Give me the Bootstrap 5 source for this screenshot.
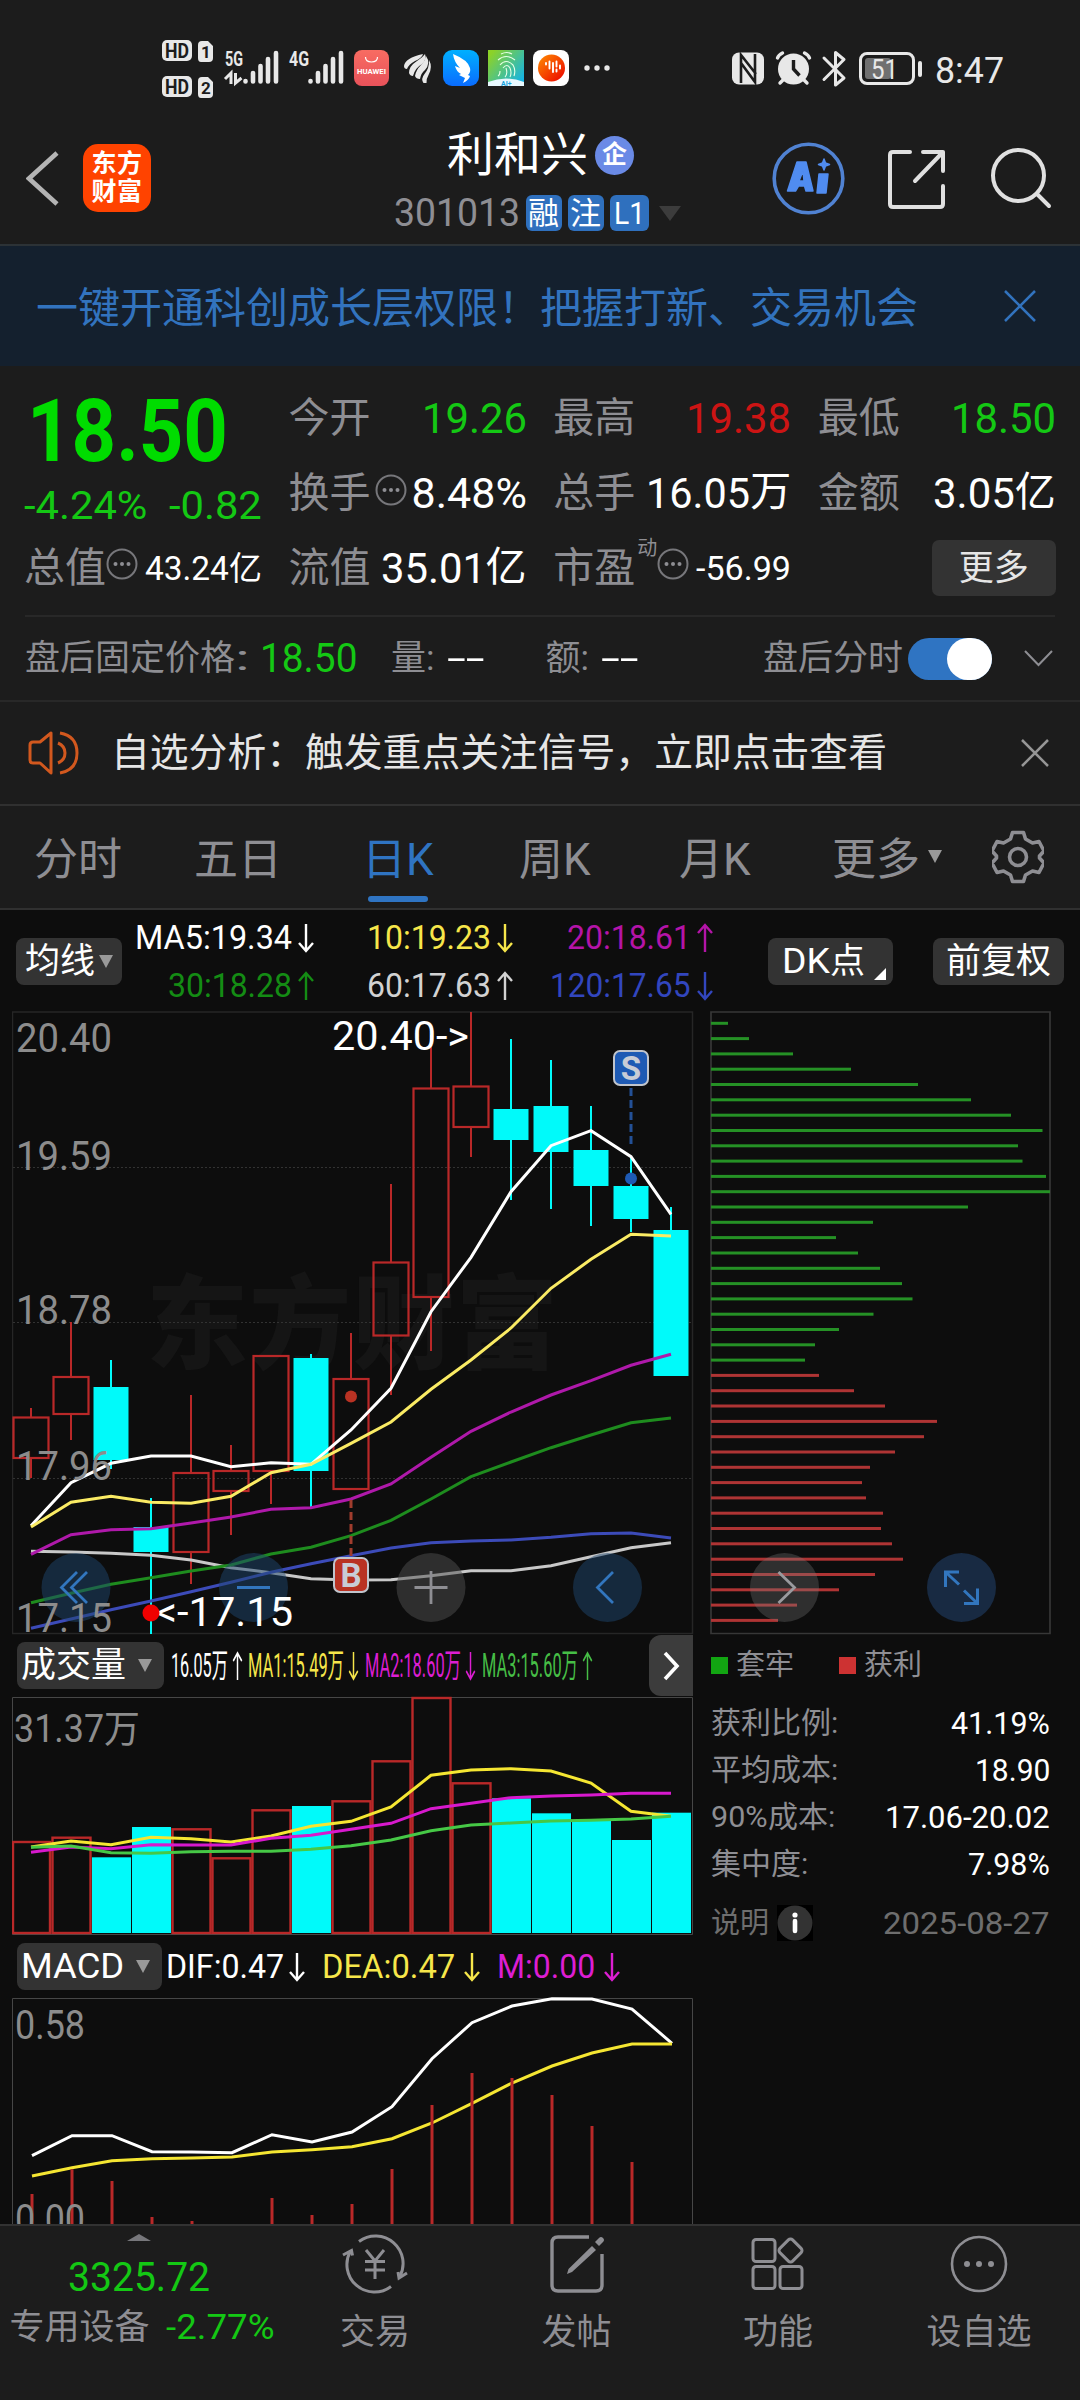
<!DOCTYPE html>
<html lang="zh-CN">
<head>
<meta charset="utf-8">
<meta name="viewport" content="width=device-width, initial-scale=1">
<title>利和兴 301013</title>
<link href="https://cdn.jsdelivr.net/npm/bootstrap@5.3.0/dist/css/bootstrap.min.css" rel="stylesheet">
<style>
:root{--bg:#1c1c1c;--deep:#0d0d0d;--grey:#8e8e93;--blue:#2f74c2;--line:#303030;--up:#cc1414;--down:#14c814}
body{background:var(--bg);color:#fff;font-family:Roboto,"Noto Sans CJK SC",sans-serif;line-height:1;width:1080px;height:2400px;overflow:hidden;margin:0}
svg{display:block;flex:none}
.nw{white-space:nowrap}
.fit{display:inline-block;white-space:nowrap;flex:none}
.fit>span{display:inline-block;transform-origin:0 50%}
.c-grey{color:var(--grey)}.c-down{color:var(--down)}.c-up{color:var(--up)}.c-blue{color:var(--blue)}
.c-y{color:#f6e64a}.c-m{color:#b414a8}.c-m2{color:#dc1ed2}.c-g{color:#148c14}.c-g2{color:#46be46}.c-w2{color:#d2d2d2}.c-b{color:#3246be}
.status{height:116px;padding:30px 0 0 162px}
.status-r{margin-left:122px}
.topbar{height:130px;display:grid;grid-template-columns:1fr auto 1fr;border-bottom:2px solid #2c3236}
.tb-l{padding:28px 0 0 26px;gap:23px}
.brand{width:68px;height:68px;border-radius:15px;background:#ff4300;font-size:25px;line-height:28px;font-weight:700;letter-spacing:.5px}
.tb-c{padding:12px 6px 0 0}
.stock{font-size:47px;line-height:54px;gap:7px;padding-left:7px}
.ent{width:39px;height:39px;border-radius:50%;background:#6a8ae6;font-size:25px;font-weight:700}
.code{font-size:38px;gap:6px;margin-top:13px;height:36px}
.tag-b{height:36px;min-width:36px;border-radius:6px;background:#2f70be;font-size:31px}
.tri{width:0;height:0;border:11px solid transparent;border-top:15px solid #3c3c3c;border-bottom:0}
.tb-r{padding:23px 0 0 0;gap:0}
.promo{height:120px;background:#14202e;padding:0 43px 0 36px;font-size:42px;color:#3273be}
.promo span{padding-top:5px}
.quote{height:249px;padding:0 24px;position:relative}
.qgrid{display:grid;grid-template-columns:repeat(4,238px);column-gap:26.6px;grid-template-rows:75px 75px 74px;padding-top:15px}
.qgrid>div{display:flex;align-items:center;justify-content:space-between;white-space:nowrap}
.lab{font-size:41px;color:var(--grey)}
.v43{font-size:43px}.v33{font-size:33px}
.price-box{grid-row:1/3;flex-direction:column;align-items:flex-start!important;justify-content:flex-start!important}
.price{font-size:87px;font-weight:700;color:#00dc00;height:92px;padding:7px 0 0 3px}
.chg{font-size:39px;height:40px;margin-top:14px}
.more{width:124px;height:56px;border-radius:7px;background:#333;font-size:35px;color:#e6e6e6}
.dong{font-size:20px;align-self:flex-start;margin:7px 0 0 2px;color:var(--grey)}
.after{height:85px;margin:0 25px;border-top:2px solid #282828;font-size:35px}
.big-n{font-size:40px;margin-left:11px}
.qty{margin-left:34px}.amt{margin-left:62px}.dash-v{margin-left:12px}
.switch-on{width:84px;height:42px;border-radius:21px;background:var(--blue);padding-left:39px;margin:0 31px 0 5px}
.switch-on i{display:block;width:45px;height:42px;border-radius:21px;background:#fff}
.notice{height:106px;border-top:2px solid #282828;border-bottom:2px solid #303030;font-size:38.8px;color:#e6e6e6;padding:0 30px 0 28px}
.notice .msg{padding-left:31px}
.tabs-k{height:104px;border-bottom:2px solid #303030;font-size:44px;color:var(--grey);padding:0 36px 0 34px;display:grid;grid-template-columns:160px 168px 157px 160px 153px 160px 52px;align-items:center}
.tabs-k>div{height:102px;display:flex;align-items:center;white-space:nowrap;padding-top:6px}
.tabs-k>div:last-child{padding-top:0}
.tab-on{color:var(--blue);position:relative}
.tab-on::after{content:"";position:absolute;left:6px;bottom:6px;width:60px;height:6px;border-radius:3px;background:var(--blue)}
.deep{background:var(--deep)}
.ma-row{height:101px;padding:2px 16px 0}
.btn-d{background:#333;border-radius:8px;height:47px;font-size:35px;color:#fff;white-space:nowrap;flex:none}
.btn-ma{gap:4px;padding:0 9px 0 9px}
.pad13{padding:0 13px}
.dk{padding:0 7px 0 14px;gap:9px;margin-right:40px}
.tdn{width:0;height:0;border:7px solid transparent;border-top:13px solid #999;border-bottom:0;flex:none}
.ma-grid{display:grid;grid-template-columns:193px 199px 200px;row-gap:6px;justify-items:end;font-size:33px}
.ma-grid>div{height:42px;display:flex;align-items:center;gap:5px}
.left-col{width:682px;margin-left:12px}
.right-col{width:342px;margin-left:17px}
.ind{height:61px;font-size:33px;padding-left:5px}
.ind .d-flex{gap:4px}
.v1{margin-left:7px}.v2{margin-left:5px}.v3{margin-left:6px}
.nextb{width:44px;height:61px;background:#3c3c3c;border-radius:12px 0 0 12px;margin-right:1px}
.legend-k{font-size:29px;height:60px;color:var(--grey)}
.sq{width:17px;height:17px;margin-right:8px}
.sq-g{background:#12a512}.sq-r{background:#cd3232;margin-left:45px}
.stat-r{height:47px;font-size:32px;width:339px}
.stat-r .c-grey{font-size:30px}
.stat-d{height:72px;font-size:32px;color:#6e6e6e;width:339px}
.note-k{font-size:29px}
.bottomnav{height:176px;border-top:2px solid #323232;font-size:35px;color:var(--grey)}
.bottomnav>div{flex:none}
.bn-idx{width:288px;padding:8px 11px 0 0}
.idx{font-size:41px}
.sector{margin-top:12px;padding-left:7px}
.bn-it{padding-top:8px}
.bn-it svg{margin-bottom:21px}
.w-a{width:174px}.w-b{width:229px}.w-c{width:215px;padding-left:13px}
</style>
<script src="https://cdn.jsdelivr.net/npm/bootstrap@5.3.0/dist/js/bootstrap.bundle.min.js"></script>
</head>
<body>
<svg width="0" height="0" class="position-absolute">
  <defs>
    <symbol id="dn" viewBox="0 0 18 30"><path d="M9 1V28M2 20l7 8 7-8" fill="none" stroke="currentColor" stroke-width="2.4"/></symbol>
    <symbol id="up" viewBox="0 0 18 30"><path d="M9 29V2M2 10l7-8 7 8" fill="none" stroke="currentColor" stroke-width="2.4"/></symbol>
    <symbol id="dots" viewBox="0 0 32 32"><circle cx="16" cy="16" r="14.5" fill="none" stroke="#77777b" stroke-width="2"/><g fill="#8e8e93"><circle cx="9.5" cy="16" r="2"/><circle cx="16" cy="16" r="2"/><circle cx="22.5" cy="16" r="2"/></g></symbol>
    <linearGradient id="gh" x2="0" y2="1"><stop stop-color="#f86c62"/><stop offset="1" stop-color="#e8525a"/></linearGradient>
    <linearGradient id="gb" x2="0" y2="1"><stop stop-color="#00b0ff"/><stop offset="1" stop-color="#0a6cff"/></linearGradient>
    <linearGradient id="gg" x2="1" y2=".8"><stop offset=".1" stop-color="#8cd228"/><stop offset="1" stop-color="#14b4e6"/></linearGradient>
    <linearGradient id="go" x2="1" y2="1"><stop stop-color="#ff8c00"/><stop offset="1" stop-color="#eb0000"/></linearGradient>
  </defs>
</svg>

<div class="status d-flex">
  <svg width="448" height="76" viewBox="162 30 448 76" font-family="Roboto,sans-serif" font-weight="700">
    <g fill="#e8e8e8">
      <rect x="162" y="40" width="30" height="21" rx="5"/><rect x="162" y="76" width="30" height="21" rx="5"/>
      <path d="M202 41h6l5 5v12q0 4-4 4h-8q-3 0-3-4V45q0-4 4-4zM202 77h6l5 5v12q0 4-4 4h-8q-3 0-3-4V81q0-4 4-4z"/>
    </g>
    <g fill="#1c1c1c" font-size="21"><text x="165" y="58" textLength="24" lengthAdjust="spacingAndGlyphs">HD</text><text x="165" y="94" textLength="24" lengthAdjust="spacingAndGlyphs">HD</text><text x="201" y="58" font-size="17">1</text><text x="201" y="94" font-size="17">2</text></g>
    <g fill="#e8e8e8" font-size="20"><text x="225" y="66" textLength="18" lengthAdjust="spacingAndGlyphs">5G</text><text x="289" y="66" textLength="20" lengthAdjust="spacingAndGlyphs">4G</text></g>
    <path d="M225 79l6-6v11M235.500 73v10l6-5" fill="none" stroke="#e8e8e8" stroke-width="3"/>
    <g stroke="#e8e8e8" stroke-width="4.600" stroke-linecap="round"><path d="M245.500 81v.5M253 73v8.500M260.500 66v15.500M268 59v22.500M276 53v28.500M310.500 81v.5M318 73v8.500M325.500 66v15.500M333 59v22.500M341 53v28.500"/></g>
    <rect x="354" y="50" width="35" height="36" rx="8" fill="url(#gh)"/><path d="M365.500 57q0 5 6 5t6-5" fill="none" stroke="#fff" stroke-width="1.200"/><text x="357" y="74" font-size="7" fill="#fff" textLength="29" lengthAdjust="spacingAndGlyphs">HUAWEI</text>
    <g fill="#e8e8e8"><path d="M404 66q1-8 19-12-1 4-8 7-6 3-8 8-3 0-3-3z"/><path d="M409 73q0-7 8-12 6-4 8-7 2 5-3 10-7 4-9 12-3 0-4-3z"/><path d="M415 76q1-6 6-11 4-4 5-9 5 7-1 14-4 3-5 9-4 0-5-3z"/><path d="M423.500 83q-3-4 1-9 5-6 4.500-14 4 7-.5 15-2 3-2 8z"/></g>
    <rect x="443" y="50" width="36" height="36" rx="9" fill="url(#gb)"/><path d="M453 54q15 6 17 14 1 4-2 7l2 1q-1 4-7 7l2-5-6-3 2-1q-5-3-6-8l5 2q-6-6-7-14z" fill="#fff"/>
    <rect x="488" y="50" width="36" height="36" fill="url(#gg)"/><path d="M488 82q18-7 36 0v4h-36z" fill="#e8f8ff"/><text x="501" y="85.500" font-size="7" fill="#14a0dc">AI+</text>
    <g fill="none" stroke="#e6ffe6" stroke-width="1.100"><path d="M501 54q6-3 11 0M498 60q8-7 17 0M500 65q6-7 13 0 3 5 1 11M503 68q4-5 7 0 2 5 0 9M506 68q2 6-1 9M500 71q0 4-2 5"/></g>
    <rect x="533" y="50" width="36" height="36" rx="8" fill="#fff"/><circle cx="551.500" cy="68" r="13.500" fill="url(#go)"/><path d="M546 63v1.500M549.500 61.500v7M553 63v9M556.500 61.500v5M556.500 69.500v2M560 65.500v3" stroke="#fff" stroke-width="1.900" fill="none" stroke-linecap="round"/>
    <g fill="#e8e8e8"><circle cx="587" cy="68" r="2.700"/><circle cx="597" cy="68" r="2.700"/><circle cx="607" cy="68" r="2.700"/></g>
  </svg>
  <svg class="status-r" width="276" height="76" viewBox="732 30 276 76" font-family="Roboto,sans-serif">
    <rect x="732" y="52.500" width="32" height="32" rx="7" fill="#e8e8e8"/><path d="M741 83V55l15 19M755 54v28L741 63" fill="none" stroke="#1c1c1c" stroke-width="2.600"/>
    <circle cx="793.500" cy="69" r="15.500" fill="#e8e8e8"/><path d="M793.500 60v9l6 6.500" fill="none" stroke="#1c1c1c" stroke-width="3.400"/><path d="M777.500 58q1-3 5-5M809.500 58q-1-3-5-5M780 83l4-4M807 83l-4-4" fill="none" stroke="#e8e8e8" stroke-width="3.400" stroke-linecap="round"/>
    <path d="M824 58l20 20-8.500 7V52.500l8.500 7-20 20" fill="none" stroke="#e8e8e8" stroke-width="3" stroke-linejoin="round" stroke-linecap="round"/>
    <rect x="860.500" y="53.500" width="53" height="30" rx="6.500" fill="none" stroke="#e8e8e8" stroke-width="3"/><rect x="865" y="58" width="26" height="21" rx="3" fill="#707070"/><rect x="918" y="61" width="4" height="16" rx="2" fill="#e8e8e8"/>
    <text x="871" y="78.500" font-size="27" fill="#e8e8e8" textLength="27" lengthAdjust="spacingAndGlyphs">51</text>
    <text x="935" y="83" font-size="37" fill="#e8e8e8" textLength="69" lengthAdjust="spacingAndGlyphs">8:47</text>
  </svg>
</div>

<div class="topbar">
  <div class="tb-l d-flex">
    <svg width="34" height="68" viewBox="26 144 34 68"><path d="M57 153L29 178.500 57 204" fill="none" stroke="#b4b4b4" stroke-width="4.600"/></svg>
    <div class="brand d-flex flex-column justify-content-center text-center"><span>东方</span><span>财富</span></div>
  </div>
  <div class="tb-c d-flex flex-column align-items-center">
    <div class="stock d-flex align-items-center"><span>利和兴</span><span class="ent d-flex align-items-center justify-content-center">企</span></div>
    <div class="code d-flex align-items-center"><span class="fit c-grey" data-w="126">301013</span><span class="tag-b d-flex align-items-center justify-content-center">融</span><span class="tag-b d-flex align-items-center justify-content-center">注</span><span class="tag-b d-flex align-items-center justify-content-center px-1"><span class="fit" data-w="31">L1</span></span><span class="tri ms-1"></span></div>
  </div>
  <div class="tb-r d-flex justify-content-end">
    <svg width="310" height="80" viewBox="770 139 310 80">
      <circle cx="808.500" cy="178.500" r="34.300" fill="none" stroke="#5082d2" stroke-width="3.600"/>
      <g fill="#508cf0" stroke="#508cf0" stroke-width="1.500" stroke-linejoin="round"><path fill-rule="evenodd" d="M797 162h9l7 29h-7l-1.500-5h-6l-3 5h-8zM803 171l-4 10h5z"/><path d="M819 174h9l-2 19h-9z"/><path d="M824 159l1.500 4 4 1.500-4 1.500-1.500 4-1.500-4-4-1.500 4-1.500z"/></g>
      <g fill="none" stroke="#e0e0e0" stroke-width="4" stroke-linecap="round" stroke-linejoin="round"><path d="M910 152h-17q-3 0-3 3v49q0 3 3 3h47q3 0 3-3v-18M923 152h20v19M943 152l-28 29"/><circle cx="1018.500" cy="175.500" r="25.500"/><path d="M1037 194l12 12"/></g>
    </svg>
  </div>
</div>

<div class="promo d-flex align-items-center justify-content-between">
  <span>一键开通科创成长层权限！把握打新、交易机会</span>
  <svg width="34" height="34"><path d="M2 2l30 30M32 2L2 32" stroke="#3273be" stroke-width="2.500"/></svg>
</div>

<div class="quote">
  <div class="qgrid">
    <div class="price-box">
      <div class="price"><span class="fit" data-w="201">18.50</span></div>
      <div class="chg c-down d-flex w-100 justify-content-between"><span class="fit" data-w="123">-4.24%</span><span class="fit" data-w="93">-0.82</span></div>
    </div>
    <div><span class="lab">今开</span><span class="fit v43 c-down" data-w="105">19.26</span></div>
    <div><span class="lab">最高</span><span class="fit v43 c-up" data-w="105">19.38</span></div>
    <div><span class="lab">最低</span><span class="fit v43 c-down" data-w="105">18.50</span></div>
    <div><span class="lab d-flex align-items-center">换手<svg width="32" height="32" class="mb-2 ms-1"><use href="#dots"/></svg></span><span class="fit v43" data-w="115">8.48%</span></div>
    <div><span class="lab">总手</span><span class="d-flex"><span class="fit v43" data-w="104">16.05</span><span class="lab text-white">万</span></span></div>
    <div><span class="lab">金额</span><span class="d-flex"><span class="fit v43" data-w="82">3.05</span><span class="lab text-white">亿</span></span></div>
    <div><span class="lab d-flex align-items-center">总值<svg width="32" height="32" class="mb-2"><use href="#dots"/></svg></span><span class="d-flex v33"><span class="fit" data-w="84">43.24</span>亿</span></div>
    <div><span class="lab">流值</span><span class="d-flex"><span class="fit v43" data-w="105">35.01</span><span class="lab text-white">亿</span></span></div>
    <div><span class="lab d-flex align-items-center">市盈</span><span class="dong">动</span><svg width="32" height="32" class="mb-2"><use href="#dots"/></svg><span class="fit v33 ms-auto" data-w="95">-56.99</span></div>
    <div class="justify-content-end"><span class="more d-flex align-items-center justify-content-center ms-auto">更多</span></div>
  </div>
</div>

<div class="after d-flex align-items-center c-grey">
  <span>盘后固定价格</span><span class="fit" data-w="14">:</span><span class="fit c-down big-n" data-w="97">18.50</span>
  <span class="qty">量:</span><span class="fit text-white dash-v" data-w="37">--</span>
  <span class="amt">额:</span><span class="fit text-white dash-v" data-w="37">--</span>
  <span class="ms-auto">盘后分时</span><span class="switch-on"><i></i></span>
  <svg width="32" height="20"><path d="M2 2l13.500 14L29 2" fill="none" stroke="#8e8e93" stroke-width="2"/></svg>
</div>

<div class="notice d-flex align-items-center">
  <svg width="52" height="46" viewBox="0 0 52 46"><g fill="none" stroke="#d2581e" stroke-width="3"><path d="M23 3v40L12 33H5q-3 0-3-3V15q0-3 3-3h7z" stroke-linejoin="round"/><path d="M30 13q7 3 7 10t-7 10M32 3q17 3 17 20T32 43"/></g></svg>
  <span class="nw msg">自选分析：触发重点关注信号，立即点击查看</span>
  <svg width="30" height="30" class="ms-auto"><path d="M2 2l26 26M28 2L2 28" stroke="#969696" stroke-width="2.500"/></svg>
</div>

<div class="tabs-k">
  <div>分时</div><div>五日</div><div class="tab-on">日K</div><div>周K</div><div>月K</div>
  <div>更多<span class="tdn ms-2 mb-2"></span></div>
  <div><svg width="52" height="54" viewBox="-26 -27 52 54"><g fill="none" stroke="#8e8e93" stroke-width="3.600" stroke-linejoin="round"><path d="M-5.500-24.500h11l2 6.500 7 4 6.500-1.500 5 9.500-4.500 5v2l4.500 5-5 9.500-6.500-1.500-7 4-2 6.500h-11l-2-6.500-7-4-6.500 1.500-5-9.500 4.500-5v-2l-4.500-5 5-9.500 6.500 1.500 7-4z"/><circle r="8.500"/></g></svg></div>
</div>

<div class="deep">
  <div class="ma-row d-flex align-items-center">
    <span class="btn-d btn-ma d-flex align-items-center">均线<i class="tdn"></i></span>
    <div class="ma-grid">
      <div><span class="fit" data-w="157">MA5:19.34</span><svg width="18" height="30"><use href="#dn"/></svg></div>
      <div class="c-y"><span class="fit" data-w="124">10:19.23</span><svg width="18" height="30"><use href="#dn"/></svg></div>
      <div class="c-m"><span class="fit" data-w="124">20:18.61</span><svg width="18" height="30"><use href="#up"/></svg></div>
      <div class="c-g"><span class="fit" data-w="124">30:18.28</span><svg width="18" height="30"><use href="#up"/></svg></div>
      <div class="c-w2"><span class="fit" data-w="124">60:17.63</span><svg width="18" height="30"><use href="#up"/></svg></div>
      <div class="c-b"><span class="fit" data-w="141">120:17.65</span><svg width="18" height="30"><use href="#dn"/></svg></div>
    </div>
    <span class="btn-d dk d-flex align-items-center ms-auto"><span><span class="fit" data-w="48">DK</span>点</span><svg width="12" height="12" class="mt-4"><path d="M12 0v12H0z" fill="#fff"/></svg></span>
    <span class="btn-d pad13 d-flex align-items-center">前复权</span>
  </div>

  <div class="d-flex">
    <div class="left-col">
      <svg id="kline" width="682" height="624" viewBox="12 1011 682 624"></svg>
      <div class="ind d-flex align-items-center nw">
        <span class="btn-d d-flex align-items-center ps-1 pe-2">成交量<i class="tdn ms-2 me-1"></i></span>
        <div class="d-flex align-items-center v1"><span class="fit" data-w="57">16.05万</span><svg width="11" height="30" viewBox="0 0 18 30" preserveAspectRatio="none"><use href="#up" width="18" height="30"/></svg></div>
        <div class="d-flex align-items-center v2 c-y"><span class="fit" data-w="96">MA1:15.49万</span><svg width="11" height="30" viewBox="0 0 18 30" preserveAspectRatio="none"><use href="#dn" width="18" height="30"/></svg></div>
        <div class="d-flex align-items-center v3 c-m2"><span class="fit" data-w="96">MA2:18.60万</span><svg width="11" height="30" viewBox="0 0 18 30" preserveAspectRatio="none"><use href="#dn" width="18" height="30"/></svg></div>
        <div class="d-flex align-items-center v3 c-g2"><span class="fit" data-w="96">MA3:15.60万</span><svg width="11" height="30" viewBox="0 0 18 30" preserveAspectRatio="none"><use href="#up" width="18" height="30"/></svg></div>
        <span class="nextb ms-auto d-flex align-items-center justify-content-center"><svg width="18" height="30"><path d="M3 2l12 13L3 28" fill="none" stroke="#fff" stroke-width="3.600"/></svg></span>
      </div>
      <svg id="vol" width="682" height="240" viewBox="12 1696 682 240"></svg>
      <div class="ind d-flex align-items-center nw">
        <span class="btn-d d-flex align-items-center ps-1 pe-2"><span class="fit" data-w="103">MACD</span><i class="tdn ms-2 me-1"></i></span>
        <div class="d-flex align-items-center ps-1"><span class="fit" data-w="118">DIF:0.47</span><svg width="18" height="32"><use href="#dn"/></svg></div>
        <div class="d-flex align-items-center ms-3 c-y"><span class="fit" data-w="133">DEA:0.47</span><svg width="18" height="32" class="ms-1"><use href="#dn"/></svg></div>
        <div class="d-flex align-items-center ms-3 c-m2"><span class="fit" data-w="98">M:0.00</span><svg width="18" height="32" class="ms-1"><use href="#dn"/></svg></div>
      </div>
      <svg id="macd" width="682" height="227" viewBox="12 1997 682 227"></svg>
    </div>
    <div class="right-col">
      <svg id="chips" width="342" height="624" viewBox="711 1011 342 624" overflow="visible"></svg>
      <div class="legend-k d-flex align-items-center"><span class="sq sq-g"></span>套牢<span class="sq sq-r"></span>获利</div>
      <div class="stat-r d-flex align-items-center justify-content-between mt-1"><span class="c-grey">获利比例:</span><span class="fit" data-w="99">41.19%</span></div>
      <div class="stat-r d-flex align-items-center justify-content-between"><span class="c-grey">平均成本:</span><span class="fit" data-w="75">18.90</span></div>
      <div class="stat-r d-flex align-items-center justify-content-between"><span class="c-grey d-flex"><span class="fit" data-w="57">90%</span>成本:</span><span class="fit" data-w="165">17.06-20.02</span></div>
      <div class="stat-r d-flex align-items-center justify-content-between"><span class="c-grey">集中度:</span><span class="fit" data-w="82">7.98%</span></div>
      <div class="stat-d d-flex align-items-center"><span class="note-k">说明</span><svg width="36" height="36" class="ms-2" viewBox="0 0 36 36"><path fill="#000" d="M0 0h36v36H0z"/><circle cx="18" cy="18" r="17.500" fill="#333"/><circle cx="18" cy="10" r="2.600" fill="#fff"/><path d="M18 16v10" stroke="#fff" stroke-width="4.600" stroke-linecap="round"/></svg><span class="fit ms-auto" data-w="167">2025-08-27</span></div>
    </div>
  </div>
</div>

<div class="bottomnav d-flex">
  <div class="bn-idx d-flex flex-column align-items-center">
    <svg width="24" height="7"><path d="M0 7L12 0l12 7z" fill="#77777b"/></svg>
    <span class="fit c-down mt-3 idx" data-w="142">3325.72</span>
    <div class="sector d-flex align-items-center nw"><span>专用设备</span><span class="fit c-down ms-3" data-w="109">-2.77%</span></div>
  </div>
  <div class="bn-it w-a d-flex flex-column align-items-center">
    <svg width="66" height="60" viewBox="-33 -30 66 60"><g fill="none" stroke="#8e8e93" stroke-width="3"><path d="M-16-22.500A27.500 27.500 0 0 1 24.500 13M16 22.500A27.500 27.500 0 0 1-24.500-13"/><path d="M-32-9l8.500-4.500 1 5M32 9l-8 5-1-6"/><path d="M-9-14L0-3 9-14M0-3v18M-10-2.500h20M-10 6h20"/></g></svg>
    交易</div>
  <div class="bn-it w-b d-flex flex-column align-items-center">
    <svg width="60" height="60" viewBox="-30 -30 60 60"><g fill="none" stroke="#8e8e93" stroke-width="3.400"><path d="M12-27h-31q-6 0-6 6v42q0 6 6 6h38q6 0 6-6v-31"/></g><path d="M15-18l4 4L-5 8l-5 2 1.500-5zM18-22l4-4q2-2 4 0t0 4l-4 4z" fill="#8e8e93"/></svg>
    发帖</div>
  <div class="bn-it w-a d-flex flex-column align-items-center">
    <svg width="56" height="60" viewBox="751 2234 56 60"><g fill="none" stroke="#8e8e93" stroke-width="3"><rect x="754" y="2239.500" width="22" height="22" rx="3"/><rect x="754" y="2266.500" width="22" height="22" rx="3"/><rect x="781" y="2266.500" width="22" height="22" rx="3"/><rect x="782.500" y="2241.500" width="18" height="18" rx="3" transform="rotate(45 791.500 2250.500)"/></g></svg>
    功能</div>
  <div class="bn-it w-c d-flex flex-column align-items-center">
    <svg width="60" height="60" viewBox="-30 -30 60 60"><circle r="27" fill="none" stroke="#8e8e93" stroke-width="2.600"/><g fill="#8e8e93"><circle cx="-12" r="3"/><circle r="3"/><circle cx="12" r="3"/></g></svg>
    设自选</div>
</div>

<script>
document.querySelectorAll('.fit').forEach(el => {
  const s = document.createElement('span');
  s.textContent = el.textContent; el.textContent = ''; el.append(s);
  const k = el.dataset.w / s.offsetWidth;
  s.style.transform = `scaleX(${k})`;
  el.style.width = el.dataset.w + 'px';
});
const X = i => 31 + 40 * i;
const RED = '#b92828', CY = '#00fafa';
const line = (ys, c, w = 3, dx = 0) => `<polyline fill="none" stroke="${c}" stroke-width="${w}" points="${ys.map((y, i) => X(i) + dx + ',' + y).join(' ')}"/>`;
const F = 'font-family="Roboto,\'Noto Sans CJK SC\',sans-serif"';
const txt = (x, y, w, t, c, s = 40) => `<text x="${x}" y="${y}" ${F} font-size="${s}" fill="${c}" textLength="${w}" lengthAdjust="spacingAndGlyphs">${t}</text>`;
const AX = '#8c8c8c';

// open/close box top, bottom, high, low, falling flag
const K = [[1417.5,1458,1408,1478,0],[1377,1414,1322,1440,0],[1387,1460,1360,1469,1],[1527,1552,1498,1634,1],[1473,1552,1395,1584,0],[1471,1491,1445,1535,0],[1356,1471,1356,1504,0],[1358,1471,1354,1509,1],[1379,1489,1333,1489,0],[1262.5,1335.5,1184,1395,0],[1088.5,1297,1035,1351,0],[1086.5,1127,1012,1157,0],[1109,1140,1039,1200,1],[1106,1152,1060,1209,1],[1150,1186,1106,1226,1],[1186,1219,1157,1232,1],[1230,1376,1207,1376,1]];
let s = `<text x="146" y="1361" ${F} font-size="102" font-weight="900" fill="#151515" textLength="412">东方财富</text>`;
s += '<path d="M12.500 1012h680v621.500h-680z" fill="none" stroke="#262626" stroke-width="1.500"/>';
s += '<path d="M13 1167.500h679M13 1322.500h679M13 1478.500h679" stroke="#323232" stroke-dasharray="2 2"/>';
K.forEach(([a, b, h, l, f], i) => {
  const x = X(i);
  s += f ? `<path d="M${x} ${h}V${l}" stroke="${CY}" stroke-width="2"/><rect x="${x - 17.5}" y="${a}" width="35" height="${b - a}" fill="${CY}"/>`
    : `<path d="M${x} ${h}V${a}M${x} ${b}V${l}" stroke="${RED}" stroke-width="2"/><rect x="${x - 17.5}" y="${a}" width="35" height="${b - a}" fill="none" stroke="${RED}" stroke-width="2.200"/>`;
});
s += '<circle cx="631" cy="1178.500" r="6" fill="#1e5ab4"/><circle cx="351" cy="1396.500" r="6" fill="#b93223"/>';
s += line([1551.3,1552,1553.3,1555.3,1560,1567.7,1572.7,1578.7,1580,1579.7,1575.7,1570.7,1570.7,1565.7,1556.7,1547.7,1542.7], '#c8c8c8');
s += line([1628.3,1619,1609.7,1601,1591.7,1582.3,1572.3,1563.7,1555.7,1548,1542.7,1541,1540,1537.3,1533.7,1533,1538], '#3c4bb9');
s += line([1602.7,1593.3,1584.3,1577.7,1571,1565,1554,1547.3,1535.7,1520.3,1499,1476.7,1462,1447.7,1435,1422.7,1418], '#1e8c1e');
s += line([1554.3,1534.7,1529.7,1528.7,1523,1517,1509.3,1507.7,1499,1484,1457.3,1431.3,1412,1395,1380.7,1365.3,1354.3], '#af19aa');
s += line([1525.7,1482.7,1463.3,1456,1456,1466.7,1462.7,1464.3,1430,1388.3,1311.7,1257.3,1191.7,1145.7,1130.7,1156.7,1214.3], '#fff');
s += line([1527,1502.3,1496.3,1502.3,1503.3,1496.3,1472.7,1464.3,1443.3,1422,1389.3,1360,1328,1288.3,1259.3,1234.3,1236], '#faeb64');
s += '<path d="M631 1088v56" stroke="#235096" stroke-width="3" stroke-dasharray="8 4"/><path d="M351 1500v57" stroke="#a03c2d" stroke-width="3" stroke-dasharray="8 4"/>';
[[1587.500,76,1],[1587.500,253.5,1],[1587.500,431,0],[1587.500,607.5,1]].forEach(([y, x, b]) => s += `<circle cx="${x}" cy="${y}" r="34.500" fill="${b ? '#1e466e' : '#505050'}" fill-opacity=".5"/>`);
s += '<g fill="none" stroke="#3276be" stroke-width="2.800"><path d="M77 1572l-15.500 15.500L77 1603M87 1572l-15.500 15.500L87 1603M237 1587.500h33M613 1572l-15.500 15.500 15.500 15.500"/><path stroke="#8e8e93" d="M414.500 1587.500h33M431 1571v33"/></g>';
[[1051.500,'20.40'],[1169.500,'19.59'],[1324,'18.78'],[1480,'17.96'],[1631.500,'17.15']].forEach(([y, t]) => s += txt(16, y, 96, t, AX));
s += txt(332, 1050, 137, '20.40-&gt;', '#fff') + txt(156, 1626, 137, '&lt;-17.15', '#fff') + '<circle cx="151" cy="1613" r="8.500" fill="#f00000"/>';
const flag = (x, y, t, c) => `<rect x="${x - 17}" y="${y - 17}" width="34" height="34" rx="6" fill="${c}" stroke="#c0c4cc" stroke-width="2"/><text x="${x}" y="${y + 12}" text-anchor="middle" font-family="Roboto,sans-serif" font-weight="700" font-size="33" fill="#c8ccd6">${t}</text>`;
s += flag(631, 1068, 'S', '#1e5ab4') + flag(351, 1575, 'B', '#b93223');
document.getElementById('kline').innerHTML = s;

// cost distribution, bar lengths in px
const G = [17,38,82,140,207,260,300,331.5,307,311.5,335,339,257,162,125,147,169,191,201.5,162.5,128,104,94];
const R = [108,143,174,226,213,184,159,151,155,172,170,181,192,164,128,86,67];
s = '<path d="M711 1012h339v621.500H711z" fill="none" stroke="#373737" stroke-width="1.700"/>';
[...G, ...R].forEach((w, i) => s += `<rect x="711" y="${(1021.8 + i * 15.31).toFixed(1)}" width="${w}" height="3" fill="${i < G.length ? '#259125' : '#af3434'}"/>`);
s += '<circle cx="784.500" cy="1587.500" r="34.500" fill="#787878" fill-opacity=".32"/><circle cx="961.500" cy="1587.500" r="34.500" fill="#182a42"/>';
s += '<path d="M778.500 1572l16 15.500-16 15.500" fill="none" stroke="#9a9a9e" stroke-width="2.800"/><path d="M959 1572h-13.500v15M946 1572.500l13 12M964 1603.500h13.500v-15M977 1603l-13-12.500" fill="none" stroke="#3276be" stroke-width="3"/>';
document.getElementById('chips').innerHTML = s;

// volume: top edge, falling flag
const V = [[1842,0],[1837.7,0],[1857.3,1],[1827,1],[1829.3,0],[1858.3,0],[1810.3,0],[1806,1],[1801.3,0],[1761.3,0],[1698,0],[1783.3,0],[1798.3,1],[1813.3,1],[1820,1],[1840,1],[1812.7,1]];
s = '<path d="M12.500 1697.500h680v237h-680z" fill="none" stroke="#464646"/>';
V.forEach(([t, f], i) => { const x = X(i) + .5; s += f ? `<rect x="${x - 19.5}" y="${t}" width="39" height="${1933 - t}" fill="${CY}"/>` : `<rect x="${i ? x - 19 : 13}" y="${t}" width="${i ? 38 : 37}" height="${1933 - t}" fill="none" stroke="${RED}" stroke-width="2.400"/>`; });
s += line([1847,1841,1844.7,1837.3,1838.7,1842,1836,1826.3,1821.3,1807,1775.3,1770,1768.7,1771,1783,1811.3,1816.3], '#f5e632');
s += line([1852.3,1847,1848.7,1844.7,1845,1845,1838.3,1835.3,1829.3,1823.3,1808.7,1803.3,1797.7,1796,1795,1793.3,1793.3], '#d719cd');
s += line([1847.3,1846,1852.7,1853.3,1851.7,1851.3,1851.3,1849.3,1845.7,1840,1830.7,1825,1823,1821,1820.3,1819,1816.3], '#46c846');
s += txt(14, 1741.5, 126, '31.37万', AX, 38);
document.getElementById('vol').innerHTML = s;

const M = [2194,2169.3,2181,2217,2221,0,2198,2215,2204,2169,2105,2073,2078,2095,2126,2162];
s = '<path d="M12.500 2230v-231.500h680V2230" fill="none" stroke="#464646"/>';
s += line([2155.7,2135.7,2135.7,2151.7,2152,2152.7,2134.7,2142,2132,2106.7,2058.7,2022.7,2006,1998.7,1999,2009,2043.3], '#fff', 3, 1);
s += line([2176,2167.7,2160.7,2158.7,2158,2157,2152,2149.7,2146.7,2138.7,2123,2103.3,2083,2066,2053,2044,2044], '#f5e632', 3, 1);
M.forEach((t, i) => { if (t) s += `<path d="M${X(i) + 1} ${t}V2224" stroke="#b92828" stroke-width="3"/>`; });
s += txt(15, 2038.5, 70, '0.58', AX) + txt(15, 2233, 70, '0.00', AX);
document.getElementById('macd').innerHTML = s;
</script>
</body>
</html>
